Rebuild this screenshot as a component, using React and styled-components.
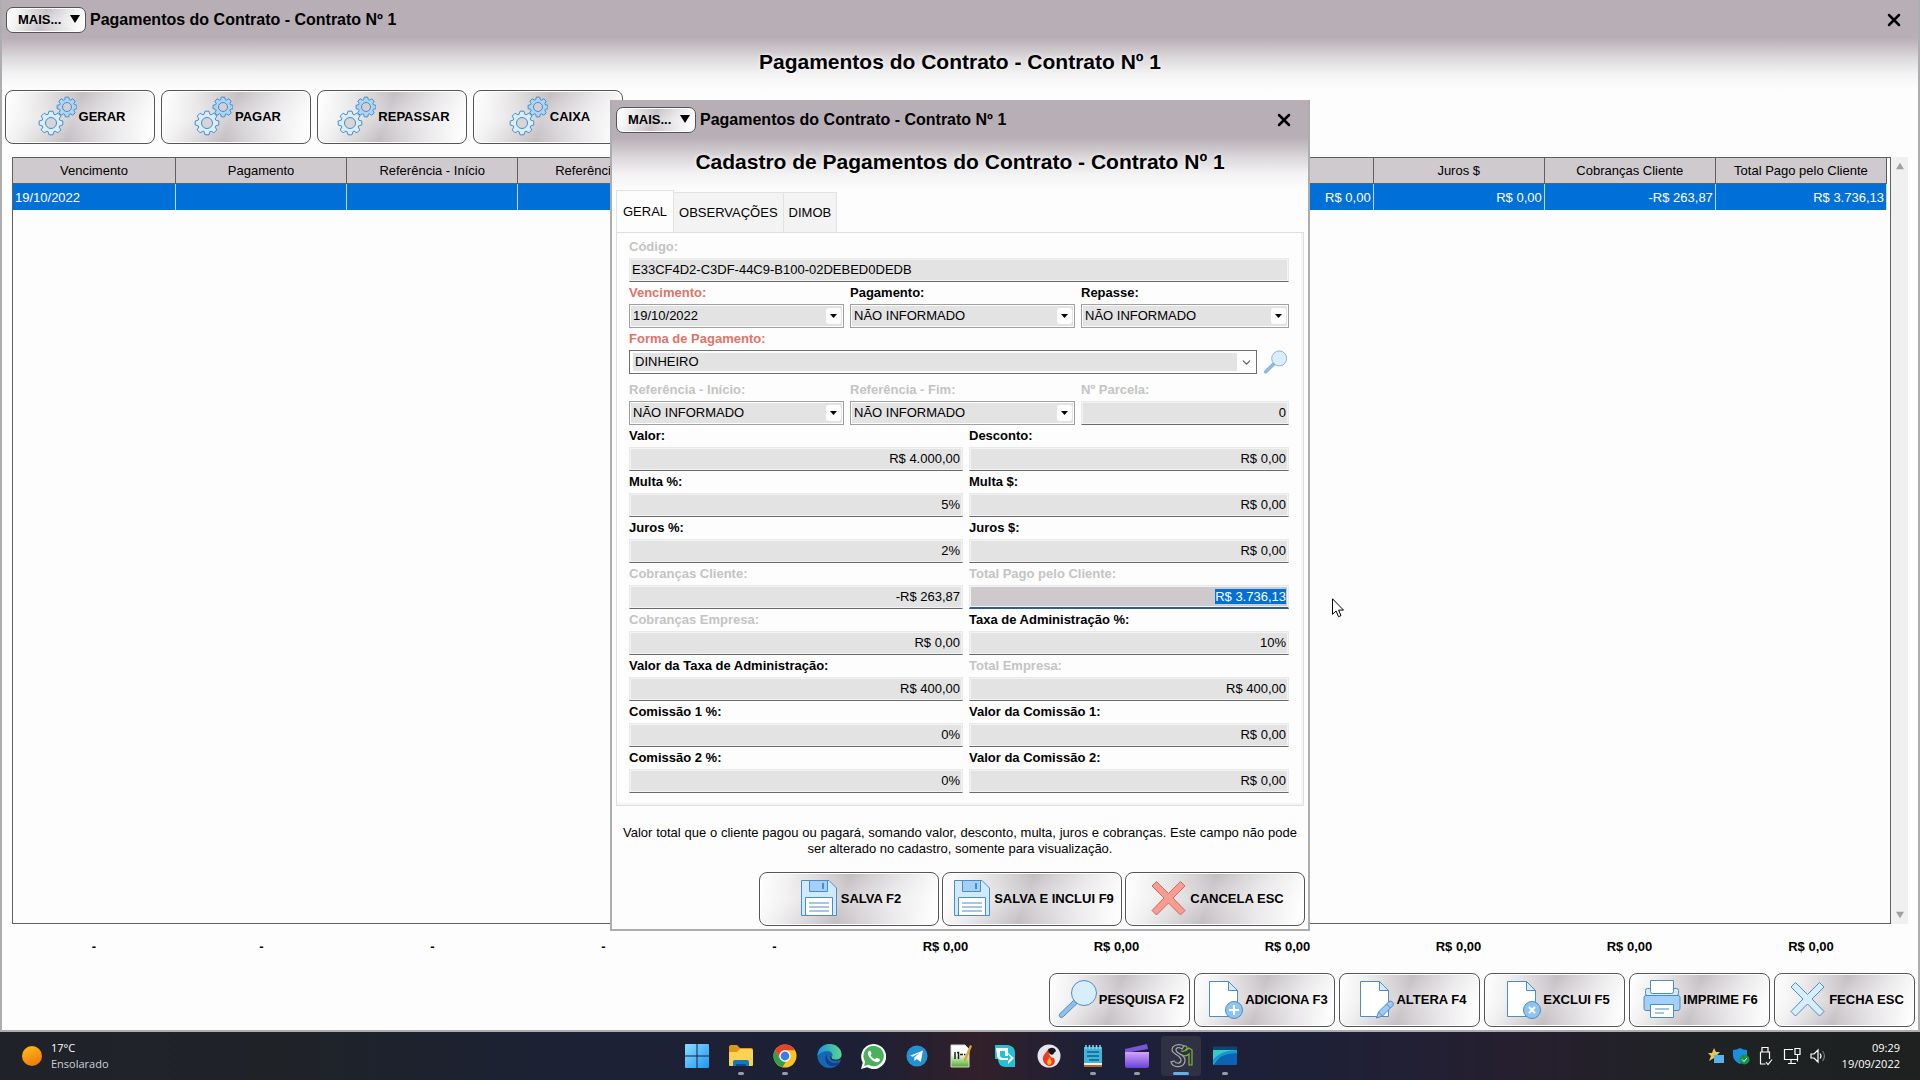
import { useEffect, useRef } from "react";
import styled, { createGlobalStyle } from "styled-components";
import { X, ChevronDown } from "lucide-react";

const GlobalStyle = createGlobalStyle`
  * {
    box-sizing: border-box;
  }

  body {
    margin: 0;
    font-family: "Liberation Sans", Arial, sans-serif;
    font-size: 13px;
    color: #000;
  }

  button, input, select {
    font-family: inherit;
    font-size: inherit;
    color: inherit;
  }
`;

const Screen = styled.div`
  display: flex;
  flex-direction: column;
  min-height: 100vh;
`;

const Window = styled.main`
  position: relative;
  flex: 1;
  display: flex;
  flex-direction: column;
  border: 2px solid #adacae;
  border-top: none;
  background: linear-gradient(#b8afb6 0, #b8afb6 38px, #dcd8db 58px, #f4f3f4 74px, #fdfdfd 90px);
`;

const TitleBar = styled.header`
  display: flex;
  align-items: center;
  gap: 4px;
  height: 38px;
  padding: 1px 14px 0 4px;
`;

const WindowTitle = styled.span`
  flex: 1;
  font-size: 16px;
  font-weight: bold;
`;

const silver = `
  background:
    linear-gradient(rgba(255, 255, 255, 0), rgba(255, 255, 255, 0.3) 50%, rgba(255, 255, 255, 0)),
    linear-gradient(108deg, #fdfdfd 3%, #f0eff0 16%, #d9d6d8 32%, #c3bdc2 47%, #d3cfd2 58%, #e8e6e8 74%, #fdfdfd 95%);
`;

const MoreButton = styled.button`
  display: flex;
  align-items: center;
  justify-content: space-between;
  width: 80px;
  height: 26px;
  padding: 0 5px 1px 11px;
  border: 1px solid #555;
  border-radius: 7px;
  box-shadow: inset 0 0 0 1px #fff;
  font-weight: bold;
  ${silver}
`;

const CloseButton = styled.button`
  display: flex;
  width: 20px;
  height: 20px;
  padding: 0;
  border: none;
  background: none;
`;

const Heading = styled.h1`
  height: 52px;
  margin: 0;
  font-size: 21px;
  line-height: 48px;
  text-align: center;
  text-shadow: 0 0 4px #fff;
`;

const Toolbar = styled.div`
  display: flex;
  justify-content: ${({ $end }) => ($end ? "flex-end" : "flex-start")};
  gap: ${({ $gap }) => $gap}px;
  padding: 0 3px;
`;

const ActionButton = styled.button`
  display: flex;
  align-items: center;
  justify-content: center;
  gap: 2px;
  width: ${({ $width }) => $width}px;
  height: 54px;
  padding: 0 0 2px 2px;
  border: 1px solid #555;
  border-radius: 8px;
  box-shadow: inset 0 0 0 1px #fff;
  font-weight: bold;
  white-space: nowrap;
  ${silver}

  svg {
    flex: none;
  }
`;

const GridArea = styled.div`
  flex: 1;
  display: flex;
  margin: 13px 10px 0;
`;

const GridBox = styled.div`
  flex: 1;
  border: 1px solid #606060;
  background: #fdfdfd;
`;

const Grid = styled.table`
  width: calc(100% - 3px);
  table-layout: fixed;
  border-collapse: separate;
  border-spacing: 0;

  th {
    height: 26px;
    padding: 0;
    border-right: 1px solid #606060;
    border-bottom: 1px solid #606060;
    background: #cfcacd;
    font-weight: normal;
  }

  th:first-child {
    width: 163px;
  }

  td {
    height: 26px;
    padding: 0 2px;
    border-right: 1px solid #b8dcf8;
    background: #0070d9;
    color: #fff;
    text-align: right;
  }

  td:first-child {
    text-align: left;
  }
`;

const ScrollTrack = styled.div`
  display: flex;
  flex-direction: column;
  justify-content: space-between;
  align-items: center;
  width: 17px;
  padding: 5px 0;
  background: #f0f0f0;
`;

const Totals = styled.div`
  display: grid;
  grid-template-columns: 164fr repeat(9, 171fr) 192fr;
  margin: 0 11px 0 10px;
  line-height: 16px;
  padding: 15px 0 18px;
  font-weight: bold;
  text-align: center;
`;

const Footer = styled.footer`
  padding-bottom: 3px;
`;

const Overlay = styled.div`
  position: absolute;
  inset: 0;
  display: grid;
  place-items: center;
  padding-top: 1px;
  pointer-events: none;
`;

const Dialog = styled.section`
  width: 700px;
  padding-bottom: 3px;
  border: 2px solid #adacae;
  border-top: none;
  pointer-events: auto;
  background: linear-gradient(#b8afb6 0, #b8afb6 38px, #dcd8db 58px, #f4f3f4 74px, #fdfdfd 90px);
`;

const Tabs = styled.div`
  display: flex;
  align-items: flex-end;
  height: 42px;
  padding: 0 4px;
`;

const Tab = styled.button`
  height: ${({ $active }) => ($active ? 42 : 40)}px;
  padding: 0 ${({ $active }) => ($active ? 6 : 5)}px;
  border: 1px solid #e2e2e2;
  border-left-width: ${({ $active }) => ($active ? 1 : 0)}px;
  border-bottom: none;
  background: ${({ $active }) => ($active ? "#fdfdfd" : "#f3f3f3")};
`;

const Panel = styled.div`
  margin: 0 4px;
  padding: 3px 14px 12px 12px;
  border: 1px solid #dedede;
  box-shadow: inset -2px -2px 0 #f4f4f4;
`;

const FieldRow = styled.div`
  display: grid;
  grid-template-columns: ${({ $columns }) => $columns || "1fr"};
  column-gap: 6px;
  margin-top: ${({ $spaced }) => ($spaced ? 5 : 0)}px;
`;

const FieldCell = styled.div`
  min-width: 0;
`;

const labelColors = { off: "#c4c4c4", required: "#dc7468", normal: "#000" };

const FieldLabel = styled.label`
  display: block;
  font-weight: bold;
  line-height: 22px;
  color: ${({ $tone }) => labelColors[$tone]};
`;

const TextInput = styled.input`
  display: block;
  width: 100%;
  height: 24px;
  padding: 0 2px 1px;
  border: 1px solid #e9e9e9;
  border-bottom-color: #6a6a6a;
  border-radius: 0;
  outline: none;
  background: #e3e3e3;
  box-shadow: inset 0 0 0 1px #f3f3f3;
  text-align: ${({ $align }) => $align || "right"};

  &:focus {
    padding-bottom: 0;
    border-bottom: 2px solid #2a5f92;
    background: #cdc9cc;
  }

  &::selection {
    background: #0070d9;
    color: #fff;
  }
`;

const SelectFrame = styled.div`
  position: relative;
  height: 24px;
  padding: ${({ $wide }) => ($wide ? "2px 19px 2px 3px" : "1px")};
  border: 1px solid ${({ $wide }) => ($wide ? "#707070" : "#a0a0a0")};
  background: #fdfdfd;

  select {
    display: block;
    width: 100%;
    height: 100%;
    padding: 0 2px 1px;
    border: none;
    border-radius: 0;
    outline: none;
    appearance: none;
    background: #e3e3e3;
  }
`;

const DropMark = styled.span`
  position: absolute;
  top: 3px;
  right: 2px;
  display: flex;
  align-items: center;
  justify-content: center;
  width: 15px;
  height: 16px;
  border-radius: 3px;
  background: #fdfdfd;
  pointer-events: none;
`;

const LookupRow = styled.div`
  display: flex;
  gap: 6px;
  padding-right: 2px;

  > div {
    flex: 1;
  }
`;

const LookupButton = styled.button`
  display: flex;
  width: 24px;
  height: 24px;
  padding: 0;
  border: none;
  background: none;
`;

const HelpText = styled.p`
  margin: 19px 11px 15px;
  line-height: 16px;
  text-align: justify;
  text-align-last: center;
`;

const Pointer = styled.svg`
  position: absolute;
  top: 598px;
  left: calc(50% + 372px);
`;

const Taskbar = styled.nav`
  display: grid;
  grid-template-columns: 1fr auto 1fr;
  align-items: center;
  height: 48px;
  background: linear-gradient(90deg, #20222a 0, #1f2328 15%, #1c2135 30%, #1d2034 45%, #32202a 51%, #1c2038 57%, #1e2038 68%, #261f2e 80%, #1f2224 88%, #1e2120 100%);
  color: #fff;
  font-family: "Open Sans", "Noto Sans", sans-serif;
  font-size: 11px;
  line-height: 16px;
`;

const Weather = styled.div`
  display: flex;
  align-items: center;
  gap: 9px;
  padding-left: 22px;

  small {
    display: block;
    font-size: 11px;
    color: #cfcfd3;
  }
`;

const Apps = styled.div`
  display: flex;
  gap: 4px;
  padding-left: 2px;
`;

const AppButton = styled.button`
  position: relative;
  display: flex;
  align-items: center;
  justify-content: center;
  width: 40px;
  height: 40px;
  padding: 0;
  border: none;
  border-radius: 4px;
  background: ${({ $state }) => ($state === "active" ? "#303244" : "transparent")};

  &::after {
    content: "";
    display: ${({ $state }) => ($state ? "block" : "none")};
    position: absolute;
    bottom: 1px;
    left: 50%;
    width: ${({ $state }) => ($state === "active" ? 16 : 6)}px;
    height: 3px;
    border-radius: 2px;
    background: ${({ $state }) => ($state === "active" ? "#62b1e8" : "#9a9ba6")};
    transform: translateX(-50%);
  }
`;

const Tray = styled.div`
  display: flex;
  align-items: center;
  justify-content: flex-end;
  gap: 7px;
  padding-right: 20px;
  text-align: right;
`;

const Clock = styled.div`
  margin-left: 8px;
`;

/* ---------- icons ---------- */

const gearPath = (cx, cy, r, teeth) => {
  const points = [];
  for (let i = 0; i < teeth; i++) {
    const a = (i / teeth) * Math.PI * 2 - Math.PI / 2;
    [[-0.32, 0.76], [-0.17, 1], [0.17, 1], [0.32, 0.76]].forEach(([d, k]) => {
      points.push(`${(cx + Math.cos(a + d) * r * k).toFixed(1)} ${(cy + Math.sin(a + d) * r * k).toFixed(1)}`);
    });
  }
  return `M${points.join("L")}Z`;
};

const line = "#4f8cc0";

const GearsIcon = () => (
  <svg width="40" height="40" viewBox="0 0 40 40" fill="#d9eefc" stroke={line} strokeLinejoin="round">
    <path d={gearPath(30, 11, 10, 8)} fill="#a9d5f9" />
    <circle cx="30" cy="11" r="4.5" fill="#d3cfd3" />
    <path d={gearPath(14, 27, 12, 8)} />
    <circle cx="14" cy="27" r="5.5" fill="#d8d5d8" />
  </svg>
);

const SearchIcon = ({ size = 40 }) => (
  <svg width={size} height={size} viewBox="0 0 40 40" stroke={line}>
    <path d="M16.5 21.5 3 34.5q-1.800 2 0 3.500 1.500 1.500 3.500-.5L20 24.500Z" fill="#8fbfea" />
    <circle cx="27" cy="14" r="12.500" fill="#d9eefc" />
  </svg>
);

const Sheet = () => (
  <>
    <path d="M6.500 2.500H25.500L34.500 11.500V37.500H6.500Z" fill="#fff" />
    <path d="M25.500 2.500V11.500H34.500Z" fill="#d4eafb" />
  </>
);

const AddIcon = () => (
  <svg width="40" height="40" viewBox="0 0 40 40" stroke={line}>
    <Sheet />
    <circle cx="31" cy="31" r="8.500" fill="#8fc4f2" />
    <path d="M31 26v10M26 31h10" stroke="#fff" strokeWidth="2" />
  </svg>
);

const EditIcon = () => (
  <svg width="40" height="40" viewBox="0 0 40 40" stroke={line}>
    <Sheet />
    <path d="m22.500 39 2-6L35 22.500q2-1 3.500.5t.5 3.500L28.500 37Z" fill="#9ccbf4" />
    <path d="m32.500 25 4 4M24.500 33l4 4" />
  </svg>
);

const DeleteIcon = () => (
  <svg width="40" height="40" viewBox="0 0 40 40" stroke={line}>
    <Sheet />
    <circle cx="31" cy="31" r="8.500" fill="#8fc4f2" />
    <path d="m28 28 6 6M34 28l-6 6" stroke="#fff" strokeWidth="2" />
  </svg>
);

const PrintIcon = () => (
  <svg width="38" height="40" viewBox="0 0 38 40" stroke={line}>
    <rect x="2.500" y="9.500" width="33" height="7" rx="2" fill="#d4eafb" />
    <path d="M3 16.500h32q2 0 2 2v11q0 2-2 2H3q-2 0-2-2v-11q0-2 2-2Z" fill="#a3d0f8" />
    <path d="M7.500 1.500h23v11q0 2-2 2h-19q-2 0-2-2Z" fill="#fff" />
    <path d="M7.500 25.500h23v13h-23Z" fill="#fff" />
    <path d="M12 30h14M12 34h9" />
  </svg>
);

const CrossIcon = ({ fill, stroke }) => (
  <svg width="40" height="40" viewBox="0 0 40 40" fill={fill} stroke={stroke} strokeLinejoin="round">
    <path d="M4 8 8.500 3.500 20.500 15.500 32.500 3.500 37 8 25 20 37 32.500 32.500 37 20.500 25 8.500 37 4 32.500 16 20Z" />
  </svg>
);

const SaveIcon = () => (
  <svg width="40" height="40" viewBox="0 0 40 40" stroke={line}>
    <path d="M2.500 2.500H30L37.500 10V37.500h-35Z" fill="#d0e9fd" />
    <path d="M10.500 2.500h18v11h-18Z" fill="#a3d0f8" />
    <path d="M24 5v6" strokeWidth="2" />
    <path d="M6.500 19.500h27v18h-27Z" fill="#fff" />
    <path d="M10 25h20M10 29h20M10 33h20" />
  </svg>
);

const Triangle = ({ size = 10, color = "#000", up }) => (
  <svg width={size} height={size} viewBox="0 0 10 10" fill={color}>
    <path d={up ? "M0 9h10L5 1Z" : "M0 1h10L5 9Z"} />
  </svg>
);

const StartIcon = () => (
  <svg width="24" height="24" viewBox="0 0 24 24">
    <linearGradient id="start" x2="1" y2="1">
      <stop stopColor="#8bdcff" />
      <stop offset="1" stopColor="#1c98f5" />
    </linearGradient>
    <path fill="url(#start)" d="M1 0h10.500v11.500H0V1q0-1 1-1ZM12.500 0H23q1 0 1 1v10.500H12.500ZM0 12.500h11.500V24H1q-1 0-1-1ZM12.500 12.500H24V23q0 1-1 1H12.500Z" />
  </svg>
);

const FolderIcon = () => (
  <svg width="24" height="24" viewBox="0 0 24 24">
    <path d="M0 3q0-2 2-2h6l3 3h11q2 0 2 2v4H0Z" fill="#d99a1c" />
    <path d="M0 8h8l3-3h11q2 0 2 2v14q0 1-1 1H1q-1 0-1-1Z" fill="#fdd154" />
    <path d="M4 22v-4q0-2 2-2h12q2 0 2 2v4Z" fill="#1577bd" />
    <path d="M7 22v-1q0-1 1-1h8q1 0 1 1v1Z" fill="#0b4f86" />
  </svg>
);

const ChromeIcon = () => (
  <svg width="24" height="24" viewBox="0 0 24 24">
    <circle cx="12" cy="12" r="11.500" fill="#fbc423" />
    <path d="M2 6.300A11.500 11.500 0 0 1 22 6.300H12A5.700 5.700 0 0 0 7 15Z" fill="#e0452f" />
    <path d="M2 6.300 7 15q2 3 5.800 2.700L9.500 23.200A11.500 11.500 0 0 1 2 6.300Z" fill="#2f9e50" />
    <circle cx="12" cy="12" r="5.700" fill="#fff" />
    <circle cx="12" cy="12" r="4.400" fill="#3b7de8" />
  </svg>
);

const EdgeIcon = () => (
  <svg width="25" height="24" viewBox="0 0 24 24">
    <linearGradient id="edge" x2="1">
      <stop stopColor="#1a94dc" />
      <stop offset="1" stopColor="#5bd68a" />
    </linearGradient>
    <circle cx="12" cy="12" r="12" fill="#1767b6" />
    <path d="M0 12C0 5 5 0 12 0s12 5 12 10c0 4-3 6-6 6-2.500 0-4-1-4-2s1-1.500 1-3c0-2-2-4-5-4-5 0-9 3-10 5Z" fill="url(#edge)" />
    <path d="M9 10c-3 5 0 12 6 12 3 0 5-1 7-4-6 3-13 0-13-8Z" fill="#123f86" />
    <path d="M13 12c-1 4 3 6 10 4l1-3c-3 4-9 3-10 1Z" fill="#1d2034" />
  </svg>
);

const WhatsIcon = () => (
  <svg width="25" height="25" viewBox="0 0 24 24">
    <path d="m0 24 1.700-6A12 12 0 1 1 6 22.400Z" fill="#fff" />
    <path d="m3 21 1-4a9.800 9.800 0 1 1 3.200 3Z" fill="#4bb05c" />
    <path d="M8 6.500c-2 1-2 3.500 0 6 2 3 5 5 7.500 5 2 0 3-1.500 2.500-3l-3-1.400-1.500 1.500c-2-.7-3.500-2.100-4.300-4l1-1.600L9 6.400Z" fill="#fff" />
  </svg>
);

const TelegramIcon = () => (
  <svg width="22" height="22" viewBox="0 0 24 24">
    <circle cx="12" cy="12" r="11.500" fill="#2492d1" />
    <path d="m4.500 11.700 14-5.700-2.400 12.500-4.500-3.300-2.300 2.300-.3-4 6.300-5.600-7.800 4.900Z" fill="#fff" />
  </svg>
);

const NotepadPlusIcon = () => (
  <svg width="24" height="24" viewBox="0 0 24 24">
    <linearGradient id="npp" x2="0" y2="1">
      <stop offset=".4" stopColor="#fff" />
      <stop offset="1" stopColor="#4fae22" />
    </linearGradient>
    <path d="M2 1h14l4 4v18H2Z" fill="url(#npp)" stroke="#d4d8cc" />
    <path d="M6 15V8M8 8.500h1.500V15M11 10.500h3M15 10.500h1.500" stroke="#222" strokeWidth="1.500" fill="none" />
    <path d="m21 1 2 1-6 15-2 1v-3Z" fill="#dda927" />
  </svg>
);

const ArrowAppIcon = () => (
  <svg width="22" height="24" viewBox="0 0 22 24">
    <path d="M1 1h13q7 1 7 8v14H11q-7-1-7-8H1Z" fill="#26bfd4" />
    <path d="M2 4h12v5l6 5-6 6v-4H8q-5 0-5-5Z" fill="#fff" />
    <path d="M6 7h5v5h3v-2l3 4-3 3v-3H9q-3 0-3-3Z" fill="#26bfd4" />
  </svg>
);

const BirdIcon = () => (
  <svg width="24" height="24" viewBox="0 0 24 24">
    <circle cx="12" cy="12" r="11.500" fill="#e6e6ee" />
    <path d="M12 4c-2 4-7 7-6 12 1 4 4 6 7 6 4 0 6-4 4-8-3 0-6-3-5-10Z" fill="#ee3b24" />
    <path d="M12 21c-3-1-2-5 1-8 0 3 3 4 1 7Z" fill="#fbb533" />
    <path d="M11 6c2-3 7-3 8 1l-2 2c-1 3-5 2-6-3Z" fill="#151515" />
  </svg>
);

const NotesIcon = () => (
  <svg width="20" height="24" viewBox="0 0 20 24">
    <path d="M1 20h18v3H1Z" fill="#b96a1f" />
    <path d="M1 19h18v2H1Z" fill="#f1f1f1" />
    <path d="M1 3h18v16H1Z" fill="#41b4dc" />
    <path d="M3 1v4M6.500 1v4M10 1v4M13.500 1v4M17 1v4" stroke="#8ed7ee" strokeWidth="1.500" />
    <path d="M4 8h12M4 12h12M6 16h10" stroke="#155d83" strokeWidth="1.500" />
  </svg>
);

const ClipIcon = () => (
  <svg width="24" height="24" viewBox="0 0 24 24">
    <linearGradient id="clip" x2="0" y2="1">
      <stop stopColor="#d4a3fb" />
      <stop offset="1" stopColor="#6743d7" />
    </linearGradient>
    <path d="M0 5 22 0l1 5L0 9Z" fill="#7a55d4" />
    <path d="M0 8h24v14q0 2-2 2H2q-2 0-2-2Z" fill="url(#clip)" />
  </svg>
);

const SnakeIcon = () => (
  <svg width="24" height="26" viewBox="0 0 24 26" fill="none" strokeWidth="1.200">
    <path d="M15 3C10 0 3 2 3 7c0 4 9 5 9 10 0 4-5 4-7 1l-3 1c2 7 14 6 14-2C16 11 7 11 7 7c0-3 4-3 6-1Z" stroke="#a4a9a8" />
    <path d="M12 8c3 1 6-1 8-3l3 2v15h-3V11c-2 2-5 2-7 1" stroke="#83b43a" />
    <path d="M14 3c5-1 5 3 2 4" stroke="#83b43a" />
  </svg>
);

const DesktopIcon = () => (
  <svg width="24" height="20" viewBox="0 0 24 20">
    <path d="M0 2q0-1 1-1h22q1 0 1 1v16q0 1-1 1H1q-1 0-1-1Z" fill="#0c63b4" />
    <path d="M0 9V2q0-1 1-1h22q1 0 1 1v3Q12 4 4 14L0 19Z" fill="#35cbc8" />
    <path d="M0 18q6-10 24-11v-3Q8 4 0 14Z" fill="#1596d2" />
    <path d="M0 1.500q0-1 1-1h22q1 0 1 1V4H0Z" fill="#0e466f" />
  </svg>
);

const trayIcons = [
  <svg key="star" width="18" height="18" viewBox="0 0 18 18">
    <path d="m7 1 2 4h4l-3 3 1 5-4-2-5 3 2-5-3-3h4Z" fill="#e9c65b" />
    <path d="M7 8h10v8H7Z" fill="#5ab2ec" />
  </svg>,
  <svg key="shield" width="18" height="18" viewBox="0 0 18 18">
    <path d="M8 1q3 2 7 2v5q0 6-7 9-7-3-7-9V3q4 0 7-2Z" fill="#1b8ee0" />
    <circle cx="12.500" cy="12.500" r="5" fill="#159447" />
    <path d="m10 12.500 2 2 3-3.500" stroke="#fff" fill="none" />
  </svg>,
  <svg key="usb" width="18" height="20" viewBox="0 0 18 20" fill="none" stroke="#fff" strokeWidth="1.200">
    <path d="M5 6V1.500h6V6M3.500 6h9v7M3.500 6v12h5M9 16l2 2.500 4-5" />
  </svg>,
  <svg key="network" width="20" height="18" viewBox="0 0 20 18" fill="none" stroke="#fff" strokeWidth="1.200">
    <path d="M11 2.500H2.500v10H15M6 16.500h8M9 12.500v4M13 1.500h5v6h-5ZM15.500 7.500v7" />
  </svg>,
  <svg key="sound" width="18" height="18" viewBox="0 0 18 18" fill="none" stroke="#fff" strokeWidth="1.200">
    <path d="M2 7v4h3l4 4V3L5 7ZM11 6.500q2 2.500 0 5" />
    <path d="M13.500 4q4 5 0 10" stroke="#777" />
  </svg>,
];

/* ---------- data ---------- */

const topActions = ["GERAR", "PAGAR", "REPASSAR", "CAIXA"];

const bottomActions = [
  ["PESQUISA F2", <SearchIcon />],
  ["ADICIONA F3", <AddIcon />],
  ["ALTERA F4", <EditIcon />],
  ["EXCLUI F5", <DeleteIcon />],
  ["IMPRIME F6", <PrintIcon />],
  ["FECHA ESC", <CrossIcon fill="#d9eefc" stroke={line} />],
];

const columns = [
  ["Vencimento", "19/10/2022"],
  ["Pagamento", ""],
  ["Referência - Início", ""],
  ["Referência - Fim", ""],
  ["", ""],
  ["", ""],
  ["", ""],
  ["", "R$ 0,00"],
  ["Juros $", "R$ 0,00"],
  ["Cobranças Cliente", "-R$ 263,87"],
  ["Total Pago pelo Cliente", "R$ 3.736,13"],
];

const totals = ["-", "-", "-", "-", "-", "R$ 0,00", "R$ 0,00", "R$ 0,00", "R$ 0,00", "R$ 0,00", "R$ 0,00"];

const amounts = [
  [["Valor:", "R$ 4.000,00"], ["Desconto:", "R$ 0,00"]],
  [["Multa %:", "5%"], ["Multa $:", "R$ 0,00"]],
  [["Juros %:", "2%"], ["Juros $:", "R$ 0,00"]],
  [["Cobranças Cliente:", "-R$ 263,87", "off"], ["Total Pago pelo Cliente:", "R$ 3.736,13", "off", true]],
  [["Cobranças Empresa:", "R$ 0,00", "off"], ["Taxa de Administração %:", "10%"]],
  [["Valor da Taxa de Administração:", "R$ 400,00"], ["Total Empresa:", "R$ 400,00", "off"]],
  [["Comissão 1 %:", "0%"], ["Valor da Comissão 1:", "R$ 0,00"]],
  [["Comissão 2 %:", "0%"], ["Valor da Comissão 2:", "R$ 0,00"]],
];

const apps = [
  [StartIcon],
  [FolderIcon, "open"],
  [ChromeIcon, "open"],
  [EdgeIcon],
  [WhatsIcon],
  [TelegramIcon],
  [NotepadPlusIcon],
  [ArrowAppIcon],
  [BirdIcon],
  [NotesIcon, "open"],
  [ClipIcon, "open"],
  [SnakeIcon, "active"],
  [DesktopIcon, "open"],
];

const three = "215fr 225fr 208fr";
const two = "334fr 320fr";

/* ---------- pieces ---------- */

const Title = () => (
  <TitleBar>
    <MoreButton>
      MAIS...
      <Triangle />
    </MoreButton>
    <WindowTitle>Pagamentos do Contrato - Contrato Nº 1</WindowTitle>
    <CloseButton aria-label="Fechar">
      <X size={20} strokeWidth={3} />
    </CloseButton>
  </TitleBar>
);

const Field = ({ id, label, value, tone = "normal", align, selected }) => {
  const input = useRef(null);

  useEffect(() => {
    if (selected) {
      input.current.focus();
      input.current.select();
    }
  }, [selected]);

  return (
    <FieldCell>
      <FieldLabel htmlFor={id} $tone={tone}>{label}</FieldLabel>
      <TextInput id={id} ref={input} defaultValue={value} $align={align} />
    </FieldCell>
  );
};

const DateField = ({ id, label, value, tone = "normal" }) => (
  <FieldCell>
    <FieldLabel htmlFor={id} $tone={tone}>{label}</FieldLabel>
    <SelectFrame>
      <select id={id}>
        <option>{value}</option>
      </select>
      <DropMark>
        <svg width="7" height="4" viewBox="0 0 7 4">
          <path d="M0 0h7L3.500 4Z" />
        </svg>
      </DropMark>
    </SelectFrame>
  </FieldCell>
);

const PaymentDialog = () => (
  <Dialog>
    <Title />
    <Heading as="h2">Cadastro de Pagamentos do Contrato - Contrato Nº 1</Heading>
    <Tabs>
      <Tab $active>GERAL</Tab>
      <Tab>OBSERVAÇÕES</Tab>
      <Tab>DIMOB</Tab>
    </Tabs>
    <Panel>
      <FieldRow>
        <Field id="codigo" label="Código:" value="E33CF4D2-C3DF-44C9-B100-02DEBED0DEDB" tone="off" align="left" />
      </FieldRow>
      <FieldRow $columns={three}>
        <DateField id="vencimento" label="Vencimento:" value="19/10/2022" tone="required" />
        <DateField id="pagamento" label="Pagamento:" value="NÃO INFORMADO" />
        <DateField id="repasse" label="Repasse:" value="NÃO INFORMADO" />
      </FieldRow>
      <FieldLabel htmlFor="forma" $tone="required">Forma de Pagamento:</FieldLabel>
      <LookupRow>
        <SelectFrame $wide>
          <select id="forma">
            <option>DINHEIRO</option>
          </select>
          <DropMark>
            <ChevronDown size={13} color="#555" />
          </DropMark>
        </SelectFrame>
        <LookupButton aria-label="Pesquisar">
          <SearchIcon size={24} />
        </LookupButton>
      </LookupRow>
      <FieldRow $columns={three} $spaced>
        <DateField id="ref-inicio" label="Referência - Início:" value="NÃO INFORMADO" tone="off" />
        <DateField id="ref-fim" label="Referência - Fim:" value="NÃO INFORMADO" tone="off" />
        <Field id="parcela" label="Nº Parcela:" value="0" tone="off" />
      </FieldRow>
      {amounts.map((row, r) => (
        <FieldRow key={r} $columns={two}>
          {row.map(([label, value, tone, selected], c) => (
            <Field key={label} id={`valor-${r}-${c}`} label={label} value={value} tone={tone} selected={selected} />
          ))}
        </FieldRow>
      ))}
    </Panel>
    <HelpText>
      Valor total que o cliente pagou ou pagará, somando valor, desconto, multa, juros e cobranças. Este campo não pode
      ser alterado no cadastro, somente para visualização.
    </HelpText>
    <Toolbar $end $gap={3}>
      <ActionButton $width={180}><SaveIcon />SALVA F2</ActionButton>
      <ActionButton $width={180}><SaveIcon />SALVA E INCLUI F9</ActionButton>
      <ActionButton $width={180}><CrossIcon fill="#f99c91" stroke="#d2685e" />CANCELA ESC</ActionButton>
    </Toolbar>
  </Dialog>
);

const App = () => (
  <Screen>
    <GlobalStyle />
    <Window>
      <Title />
      <Heading>Pagamentos do Contrato - Contrato Nº 1</Heading>
      <Toolbar $gap={6}>
        {topActions.map((label) => (
          <ActionButton key={label} $width={150}><GearsIcon />{label}</ActionButton>
        ))}
      </Toolbar>

      <GridArea>
        <GridBox>
          <Grid>
            <thead>
              <tr>{columns.map(([name], i) => <th key={i}>{name}</th>)}</tr>
            </thead>
            <tbody>
              <tr>{columns.map(([, value], i) => <td key={i}>{value}</td>)}</tr>
            </tbody>
          </Grid>
        </GridBox>
        <ScrollTrack>
          <Triangle size={8} color="#a0a0a0" up />
          <Triangle size={8} color="#a0a0a0" />
        </ScrollTrack>
      </GridArea>

      <Footer>
        <Totals>
          {totals.map((total, i) => <span key={i}>{total}</span>)}
        </Totals>
        <Toolbar $end $gap={4}>
          {bottomActions.map(([label, icon]) => (
            <ActionButton key={label} $width={141}>{icon}{label}</ActionButton>
          ))}
        </Toolbar>
      </Footer>

      <Overlay>
        <PaymentDialog />
      </Overlay>
      <Pointer width="13" height="20" viewBox="0 0 13 20">
        <path d="M.5.8v15.500l3.600-3.300 2.400 5.700 2.500-1.100-2.400-5.500h4.900Z" fill="#fff" stroke="#000" />
      </Pointer>
    </Window>

    <Taskbar>
      <Weather>
        <svg width="20" height="20" viewBox="0 0 20 20">
          <linearGradient id="sun" x2="0.500" y2="1">
            <stop stopColor="#fcc21b" />
            <stop offset="1" stopColor="#f57c0a" />
          </linearGradient>
          <circle cx="10" cy="10" r="10" fill="url(#sun)" />
        </svg>
        <div>
          17°C
          <small>Ensolarado</small>
        </div>
      </Weather>
      <Apps>
        {apps.map(([Icon, state], i) => (
          <AppButton key={i} $state={state}><Icon /></AppButton>
        ))}
      </Apps>
      <Tray>
        {trayIcons}
        <Clock>
          09:29
          <br />
          19/09/2022
        </Clock>
      </Tray>
    </Taskbar>
  </Screen>
);

export default App;
